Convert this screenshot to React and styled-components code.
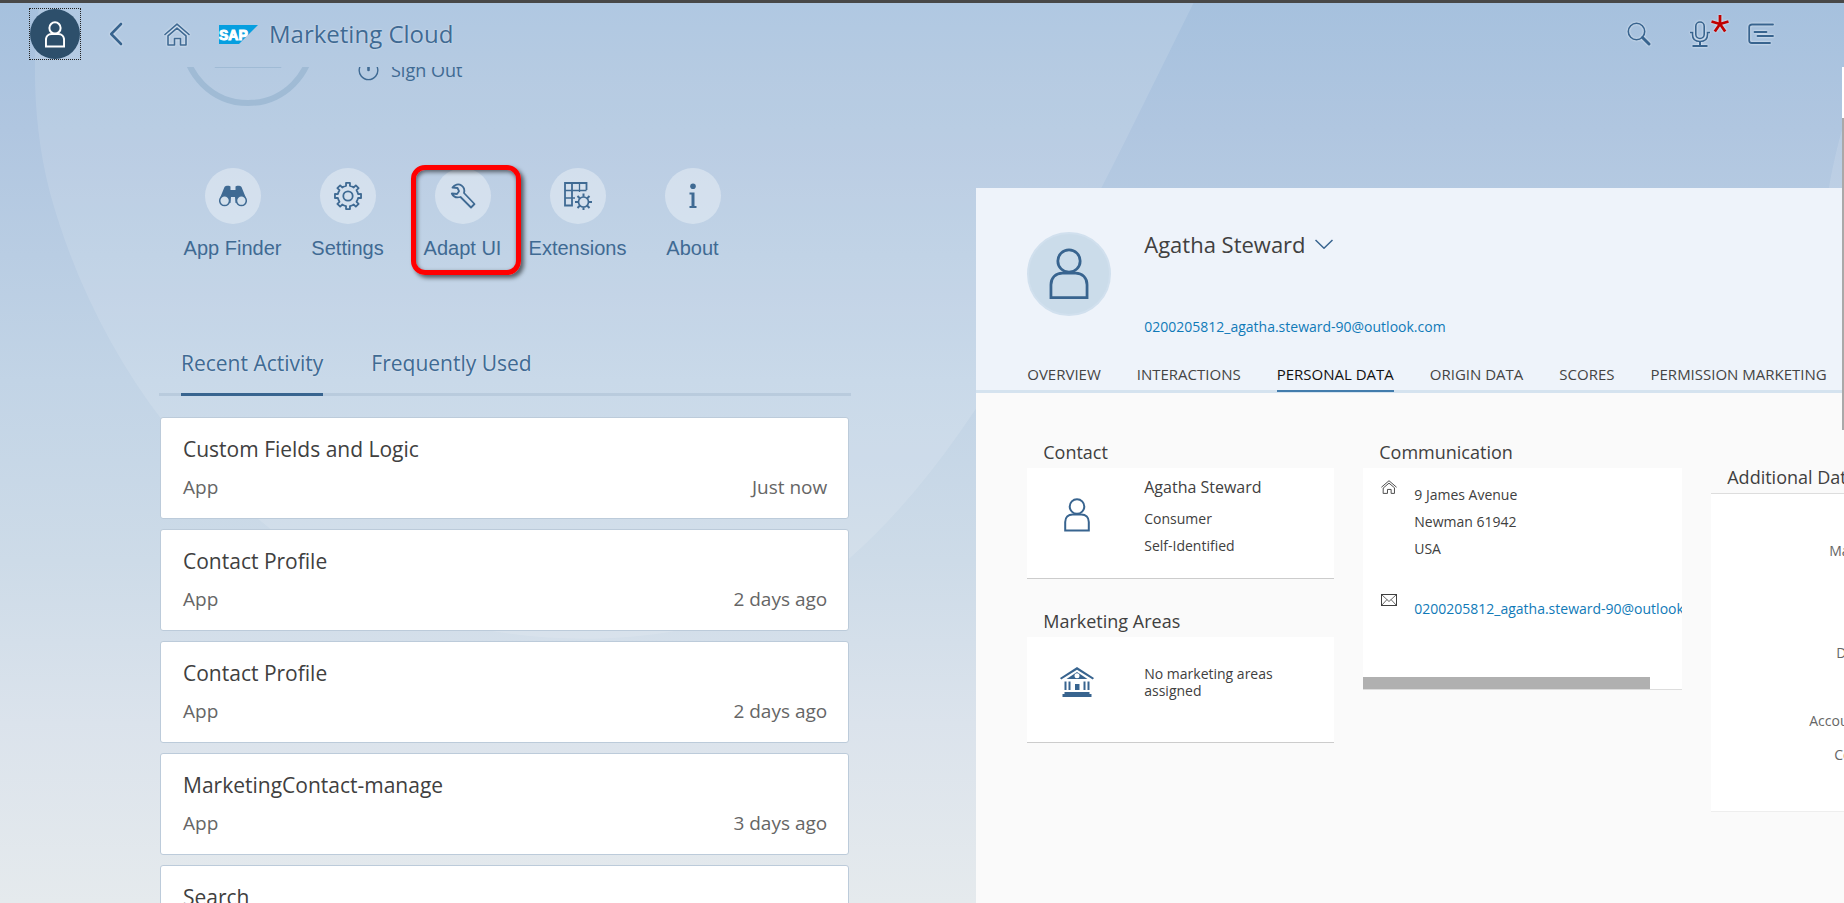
import React from "react";
import styled, { createGlobalStyle, css } from "styled-components";

const ink = "#3f6a93";
const uiFont = '"Open Sans", "Noto Sans", sans-serif';

const Global = createGlobalStyle`
  *, *::before, *::after { box-sizing: border-box; }
  html, body, #root { height: 100%; }
  body { margin: 0; font-family: ${uiFont}; color: #404040; }
  button { font: inherit; color: inherit; background: none; border: 0; padding: 0; cursor: pointer; }
  h1, h2, h3, p, ul, dl, dd, dt { margin: 0; padding: 0; font-weight: 400; }
  ul { list-style: none; }
  a { text-decoration: none; }
  svg { display: block; flex: none; }
`;

const Page = styled.div`
  position: relative;
  display: flex;
  flex-direction: column;
  height: 100vh;
  min-height: 600px;
  overflow: hidden;
  border-top: 3px solid #484848;
  background: linear-gradient(#a6c1de 0%, #b0c6e0 14%, #c2d4e6 42%, #cddbe8 62%, #dbe3ec 80%, #e5eaed 100%);
`;

const Backdrop = styled.svg`
  position: absolute;
  inset: 0;
  width: 100%;
  height: 100%;
`;

/* ---------- shell bar ---------- */

const ShellBar = styled.header`
  position: relative;
  display: flex;
  align-items: center;
  flex: 0 0 64px;
  padding: 0 70px 2px 29px;
  color: ${ink};
`;

const UserButton = styled.button`
  display: grid;
  place-items: center;
  width: 52px;
  height: 52px;
  border: 1px dotted #222;
  margin-right: 27px;
`;

const UserDisc = styled.span`
  display: grid;
  place-items: center;
  width: 50px;
  height: 50px;
  border-radius: 50%;
  background: #2d4f6b;
  color: #fff;
`;

const ShellButton = styled.button`
  position: relative;
  display: grid;
  place-items: center;
  width: ${(p) => p.$width || 28}px;
  height: 32px;
  margin-right: ${(p) => p.$gap || 0}px;
  svg { filter: drop-shadow(0 0 1px rgba(255, 255, 255, 0.8)); }
`;

const ShellTitle = styled.h1`
  flex: 1;
  margin-left: 11px;
  font-size: 24px;
  line-height: 32px;
  text-shadow: 0 0 2px rgba(255, 255, 255, 0.6);
`;

const Star = styled.svg`
  position: absolute;
  top: -3px;
  right: -19px;
`;

/* ---------- columns ---------- */

const Columns = styled.main`
  position: relative;
  display: grid;
  grid-template-columns: 9fr 8fr;
  flex: 1;
  min-height: 0;
  overflow: hidden;
`;

const MePane = styled.section`
  min-width: 0;
  padding: 0 127px 0 160px;
  color: ${ink};
  text-shadow: 0 0 2px rgba(255, 255, 255, 0.5);
`;

const Profile = styled.div`
  display: flex;
  align-items: flex-end;
  gap: 43px;
  height: 39px;
  padding-left: 21px;
  overflow: hidden;
`;

const SignOut = styled.button`
  display: flex;
  align-items: center;
  gap: 12px;
  height: 28px;
  margin-bottom: 22px;
  font-size: 18px;
  line-height: 28px;
`;

const Actions = styled.ul`
  display: flex;
  padding: 62px 0 0 15px;
`;

const ActionItem = styled.li`
  position: relative;
  flex: 0 0 115px;
`;

const ActionButton = styled.button`
  display: flex;
  flex-direction: column;
  align-items: center;
  gap: 12px;
  width: 100%;
  font-family: "Liberation Sans", Arial, sans-serif;
  font-size: 20px;
  line-height: 24px;
  white-space: nowrap;
`;

const ActionDisc = styled.span`
  display: grid;
  place-items: center;
  width: 56px;
  height: 56px;
  border-radius: 50%;
  background: rgba(226, 235, 243, 0.6);
`;

const Marker = styled.span`
  position: absolute;
  top: -3px;
  left: 6px;
  width: 110px;
  height: 110px;
  border: 5px solid #f00;
  border-radius: 14px;
  box-shadow: 3px 3px 4px rgba(0, 0, 0, 0.55), inset 1px 2px 4px rgba(0, 0, 0, 0.55);
  pointer-events: none;
`;

const ActivityTabs = styled.div`
  display: flex;
  gap: 48px;
  margin: 86px -2px 0 -1px;
  padding-left: 22px;
  border-bottom: 3px solid #b9cbdd;
`;

const ActivityTab = styled.button`
  height: 50px;
  padding-bottom: 14px;
  margin-bottom: -3px;
  font-size: 21px;
  line-height: 30px;
  border-bottom: 3px solid ${(p) => (p.$active ? "#38648f" : "transparent")};
  text-shadow: inherit;
`;

const ActivityList = styled.ul`
  display: flex;
  flex-direction: column;
  gap: 10px;
  padding-top: 21px;
`;

const ActivityCard = styled.li`
  display: grid;
  grid-template-columns: 1fr auto;
  row-gap: 8px;
  height: 102px;
  padding: 16px 21px 0 22px;
  border: 1px solid #bccbda;
  border-radius: 3px;
  background: #fff;
  color: #666;
  font-size: 19px;
  line-height: 30px;
  align-content: start;
  text-shadow: none;
`;

const ActivityTitle = styled.h3`
  grid-column: 1 / -1;
  color: #404040;
  font-size: 21px;
  line-height: 30px;
`;

/* ---------- contact panel ---------- */

const Panel = styled.section`
  display: flex;
  flex-direction: column;
  min-width: 0;
  margin-top: 121px;
  overflow: hidden;
  background: #fafafa;
`;

const PanelHead = styled.div`
  padding: 44px 0 0 51px;
  background: #eef3fa;
  border-bottom: 3px solid #d5e3ef;
`;

const Identity = styled.div`
  display: flex;
  gap: 33px;
`;

const Avatar = styled.span`
  display: grid;
  place-items: center;
  flex: none;
  width: 84px;
  height: 84px;
  border-radius: 50%;
  border: 2px solid #d1e0ee;
  background: #cbdcea;
  color: #38648f;
`;

const NameButton = styled.button`
  display: flex;
  align-items: center;
  gap: 9px;
  height: 24px;
  font-size: 22px;
  line-height: 24px;
`;

const link = css`
  color: #107ab8;
  font-size: 14px;
  line-height: 20px;
  white-space: nowrap;
`;

const HeadMail = styled.a`
  ${link}
  display: block;
  margin-top: 61px;
`;

const PanelTabs = styled.div`
  display: flex;
  gap: 36px;
  margin-top: 26px;
`;

const PanelTab = styled.button`
  flex: none;
  height: 29px;
  padding-bottom: 5px;
  margin-bottom: -2px;
  font-size: 15px;
  line-height: 22px;
  white-space: nowrap;
  color: ${(p) => (p.$active ? "#111" : "#444")};
  border-bottom: 2px solid ${(p) => (p.$active ? "#427cac" : "transparent")};
`;

const PanelBody = styled.div`
  display: flex;
  align-items: flex-start;
  gap: 29px;
  padding: 47px 0 0 51px;
`;

const Stack = styled.div`
  display: flex;
  flex-direction: column;
  flex: 0 0 ${(p) => p.$width}px;
  gap: 30px;
  padding-top: ${(p) => p.$drop || 0}px;
  min-width: 0;
`;

const BlockTitle = styled.h2`
  height: 28px;
  padding-left: 16px;
  font-size: 18px;
  line-height: 24px;
  white-space: nowrap;
`;

const Block = styled.div`
  display: flex;
  height: ${(p) => p.$height}px;
  border-bottom: 1px solid #ccc;
  background: #fff;
  font-size: 14px;
`;

const BlockIcon = styled.span`
  display: flex;
  justify-content: center;
  flex: 0 0 100px;
  padding-top: 30px;
  color: #38648f;
`;

const BlockText = styled.div`
  flex: 1;
  padding: ${(p) => p.$top}px 40px 0 17px;
  line-height: ${(p) => p.$line}px;
`;

const Person = styled.p`
  margin-bottom: 4px;
  font-size: 16px;
`;

const Scroller = styled.div`
  display: flex;
  flex-direction: column;
  height: 222px;
  border-bottom: 1px solid #ddd;
  background: #fff;
  overflow: hidden;
  font-size: 14px;
`;

const Entry = styled.div`
  display: flex;
  gap: 17px;
  padding: 12px 0 0 18px;
  height: ${(p) => p.$height}px;
  line-height: 27px;
  white-space: nowrap;
`;

const EntryText = styled.address`
  padding-top: 1px;
  font-style: normal;
  a { ${link} line-height: 27px; }
`;

const ScrollThumb = styled.div`
  width: 90%;
  height: 12px;
  margin-top: auto;
  background: #b0b0b0;
`;

const Fields = styled.dl`
  height: 319px;
  padding-top: 40px;
  border-top: 1px solid #ddd;
  border-bottom: 1px solid #eee;
  background: #fff;
  color: #666;
  font-size: 14px;
`;

const Field = styled.dt`
  height: 34px;
  padding-left: ${(p) => p.$start}px;
  line-height: 34px;
  white-space: nowrap;
`;

const PageRail = styled.div`
  position: absolute;
  top: 0;
  right: 0;
  width: 2px;
  height: 363px;
  border-top: 51px solid #fff;
  background: #a9a9a9;
`;

/* ---------- drawings ---------- */

const PersonIcon = ({ w, h, stroke }) => (
  <svg width={w} height={h} viewBox="0 0 26 34" fill="none" stroke="currentColor" strokeWidth={stroke}>
    <circle cx="13" cy="8.5" r="7.3" />
    <path d="M1.2 32.5V24c0-4.500 3-7.500 7.500-7.500h8.600c4.500 0 7.500 3 7.500 7.500v8.500z" />
  </svg>
);

const HomeIcon = ({ w, h, stroke = 1.6 }) => (
  <svg width={w} height={h} viewBox="0 0 26 23" fill="none" stroke="currentColor" strokeWidth={stroke} strokeLinecap="round" strokeLinejoin="round">
    <path d="M1 11.500L13 1.200l12 10.300" />
    <path d="M4 12.800L13 5.200l9 7.600v9.200h-5.500v-6.500h-6v6.500H4z" />
  </svg>
);

const BackIcon = () => (
  <svg width="14" height="24" viewBox="0 0 14 24" fill="none" stroke="#38648f" strokeWidth="2.600" strokeLinecap="round" strokeLinejoin="round">
    <path d="M12 2L2.200 12 12 22" />
  </svg>
);

const SapLogo = () => (
  <svg width="39" height="19" viewBox="0 0 39 19" role="img" aria-label="SAP">
    <path d="M0 0h39L20 19H0z" fill="#069fe0" />
    <text x="0" y="15" fill="#fff" stroke="#fff" strokeWidth="1" fontFamily="Liberation Sans, Arial, sans-serif" fontWeight="700" fontSize="14">SAP</text>
  </svg>
);

const SearchIcon = () => (
  <svg width="24" height="24" viewBox="0 0 24 24" fill="none" stroke="#38648f" strokeLinecap="round">
    <circle cx="9.500" cy="9.500" r="8.200" strokeWidth="1.600" />
    <path d="M15.500 15.500l6.500 6.500" strokeWidth="3" />
  </svg>
);

const MicIcon = () => (
  <svg width="20" height="26" viewBox="0 0 20 26" fill="none" stroke="#38648f" strokeWidth="1.600">
    <rect x="5.800" y="1" width="8.400" height="16.500" rx="4.200" />
    <path d="M0 11.500h2.500v2c0 4.500 3 7 7.500 7s7.500-2.500 7.500-7v-2H20" />
    <path d="M10 20.500V25M2.500 25h15" strokeWidth="2" />
  </svg>
);

const MenuIcon = () => (
  <svg width="26" height="22" viewBox="0 0 26 22" fill="none" stroke="#38648f" strokeWidth="1.800" strokeLinecap="round">
    <path d="M25 1.500H4C2.300 1.500 1.200 2.600 1.200 4v13.500c0 1.600 1 2.500 2.600 2.500H22" />
    <path d="M6.500 9h12M9.500 13h15.500" />
  </svg>
);

const PowerIcon = () => (
  <svg width="21" height="21" viewBox="0 0 21 21" fill="none" stroke="currentColor">
    <path d="M6 2.200a9.300 9.300 0 1 0 9 0" strokeWidth="1.400" />
    <path d="M10.500 0v10" strokeWidth="2.600" strokeLinecap="round" />
  </svg>
);

const ProfileRing = () => (
  <svg width="134" height="134" viewBox="0 0 134 134" fill="none" stroke="#a0bbd5">
    <circle cx="67" cy="67" r="64" strokeWidth="6" />
    <circle cx="67" cy="42" r="16" />
    <path d="M34 95.500V80c0-12 7-20 18-20h30c11 0 18 8 18 20v15.500z" />
  </svg>
);

const BinocularsIcon = () => (
  <svg width="28" height="22" viewBox="0 0 28 22" fill="currentColor">
    <path d="M5.500 2C6 .800 10.500.300 11.500 1.500V5h5V1.500c1-1.200 5.500-.700 6 .500l4.500 11-5 5h-5.500L16 12h-4l-.500 6H6l-5-5z" />
    <circle cx="5.600" cy="15.700" r="4.900" fill="#d3e0ec" stroke="currentColor" strokeWidth="1.500" />
    <circle cx="22.400" cy="15.700" r="4.900" fill="#d3e0ec" stroke="currentColor" strokeWidth="1.500" />
  </svg>
);

const gearPath = (c, root, tip, teeth, share) => {
  const step = (Math.PI * 2) / teeth;
  const at = (r, a) => `${(c + r * Math.sin(a)).toFixed(2)} ${(c - r * Math.cos(a)).toFixed(2)}`;
  let d = "";
  for (let i = 0; i < teeth; i += 1) {
    const a = i * step;
    const half = step * share;
    d += `${i ? "L" : "M"}${at(root, a - half)}L${at(tip, a - half * 0.8)}L${at(tip, a + half * 0.8)}L${at(root, a + half)}`;
    d += `A${root} ${root} 0 0 1 ${at(root, a + step - half)}`;
  }
  return `${d}z`;
};

const GearIcon = () => (
  <svg width="28" height="28" viewBox="0 0 28 28" fill="none" stroke="currentColor" strokeWidth="1.800" strokeLinejoin="round">
    <path d={gearPath(14, 10.3, 13.2, 8, 0.24)} />
    <circle cx="14" cy="14" r="4.700" />
  </svg>
);

const WrenchIcon = () => (
  <svg width="26" height="26" viewBox="0 0 26 26" fill="none" stroke="currentColor" strokeWidth="1.800" strokeLinejoin="round">
    <path d="M2.500 4.500C4.500 1.500 8.500.500 11.500 2.500c2.500 1.700 3.300 4.500 2.500 7.500l10.500 11-3.500 3.500L10.500 14c-3.500 1-7 0-8.700-3.500l5.200.500 2-2.800L7.500 5z" />
  </svg>
);

const ExtensionsIcon = () => (
  <svg width="28" height="28" viewBox="0 0 28 28" fill="none" stroke="currentColor">
    <path d="M22.500 8V1H1v22.500h7V1" strokeWidth="1.800" />
    <path d="M1 8.500h21.500M1 16h10M15.500 1v9" strokeWidth="1.300" />
    <circle cx="19.500" cy="20" r="5" strokeWidth="1.700" />
    <path d="M19.500 11.500v3.200M19.500 25.300v2.700M11 20h3.200M24.800 20H28M13.500 14l2.200 2.200M23.300 23.800l2.200 2.200M25.500 14l-2.200 2.200M15.700 23.800l-2.200 2.200" strokeWidth="2" />
  </svg>
);

const InfoIcon = () => (
  <svg width="8" height="26" viewBox="0 0 8 26" fill="currentColor">
    <circle cx="4" cy="3.200" r="2.800" />
    <path d="M.500 9.500h5v13.500H7.500v2h-7v-2h2v-11.500h-2z" />
  </svg>
);

const BankIcon = () => (
  <svg width="34" height="30" viewBox="0 0 34 30" fill="currentColor">
    <path d="M0 11L17 0l17 11-1.200 1.500L17 2.700 1.200 12.500z" />
    <path fillRule="evenodd" d="M6.500 12L17 5l10.500 7zM17 6.200a2.500 2.500 0 1 0 0 5 2.500 2.500 0 0 0 0-5z" />
    <path d="M4.500 14.500h2V23h-2zM8.500 14.500h2V23h-2zM15 17h4.500v6H15zM23.500 14.500h2V23h-2zM27.500 14.500h2V23h-2zM4.500 25h25v2h2v3h-29v-3h2z" />
  </svg>
);

const MailIcon = () => (
  <svg width="16" height="12" viewBox="0 0 16 12" fill="none" stroke="currentColor">
    <rect x="0.500" y="0.500" width="15" height="11" />
    <path d="M.500.500L8 7.500l7.500-7M.500 11.500l5.500-6M15.500 11.500l-5.500-6" strokeWidth="0.800" />
  </svg>
);

const ChevronIcon = () => (
  <svg width="18" height="10" viewBox="0 0 18 10" fill="none" stroke="#38648f" strokeWidth="1.500">
    <path d="M.500 1L9 9.200 17.500 1" />
  </svg>
);

/* ---------- data ---------- */

const actions = [
  { label: "App Finder", icon: <BinocularsIcon /> },
  { label: "Settings", icon: <GearIcon /> },
  { label: "Adapt UI", icon: <WrenchIcon />, marked: true },
  { label: "Extensions", icon: <ExtensionsIcon /> },
  { label: "About", icon: <InfoIcon /> },
];

const recent = [
  ["Custom Fields and Logic", "Just now"],
  ["Contact Profile", "2 days ago"],
  ["Contact Profile", "2 days ago"],
  ["MarketingContact-manage", "3 days ago"],
  ["Search", "3 days ago"],
];

const sections = ["OVERVIEW", "INTERACTIONS", "PERSONAL DATA", "ORIGIN DATA", "SCORES", "PERMISSION MARKETING"];

const fields = [
  ["Marital Status:", 118],
  ["", 0],
  ["", 0],
  ["Department:", 125],
  ["", 0],
  ["Account:", 98],
  ["Company:", 123],
];

export default function App() {
  return (
    <Page>
      <Global />
      <Backdrop viewBox="0 0 1844 900" preserveAspectRatio="none" aria-hidden="true">
        <path
          d="M40 -3C32 50 32 120 50 190C72 270 110 350 165 421C220 490 300 560 400 605C560 660 740 640 850 555C980 440 1070 250 1195 -3z"
          fill="#fff"
          fillOpacity="0.120"
        />
        <path d="M1844 120C1838 140 1832 165 1828 190H1844z" fill="#fff" fillOpacity="0.120" />
      </Backdrop>

      <ShellBar>
        <UserButton aria-label="User">
          <UserDisc><PersonIcon w={20} h={27} stroke={2.6} /></UserDisc>
        </UserButton>
        <ShellButton $width={15} $gap={41} aria-label="Back"><BackIcon /></ShellButton>
        <ShellButton $width={26} $gap={29} aria-label="Home"><HomeIcon w={26} h={23} /></ShellButton>
        <SapLogo />
        <ShellTitle>Marketing Cloud</ShellTitle>
        <ShellButton $width={24} $gap={39} aria-label="Search"><SearchIcon /></ShellButton>
        <ShellButton $width={20} $gap={38} aria-label="Voice input">
          <MicIcon />
          <Star width="18" height="18" viewBox="0 0 18 18" stroke="#c00000" strokeWidth="2.800">
            <path d="M9 9V0M9 9L.500 6.500M9 9l8.500-2.500M9 9l-5.200 7.500M9 9l5.200 7.500" />
          </Star>
        </ShellButton>
        <ShellButton $width={26} aria-label="Menu"><MenuIcon /></ShellButton>
      </ShellBar>

      <Columns>
        <MePane>
          <Profile>
            <ProfileRing />
            <SignOut><PowerIcon />Sign Out</SignOut>
          </Profile>
          <Actions>
            {actions.map((a) => (
              <ActionItem key={a.label}>
                <ActionButton>
                  <ActionDisc>{a.icon}</ActionDisc>
                  {a.label}
                </ActionButton>
                {a.marked && <Marker />}
              </ActionItem>
            ))}
          </Actions>
          <ActivityTabs role="tablist">
            <ActivityTab role="tab" aria-selected="true" $active>Recent Activity</ActivityTab>
            <ActivityTab role="tab" aria-selected="false">Frequently Used</ActivityTab>
          </ActivityTabs>
          <ActivityList>
            {recent.map(([title, when], i) => (
              <ActivityCard key={i}>
                <ActivityTitle>{title}</ActivityTitle>
                <span>App</span>
                <span>{when}</span>
              </ActivityCard>
            ))}
          </ActivityList>
        </MePane>

        <Panel>
          <PanelHead>
            <Identity>
              <Avatar><PersonIcon w={40} h={52} stroke={1.8} /></Avatar>
              <div>
                <NameButton>Agatha Steward<ChevronIcon /></NameButton>
                <HeadMail href="#mail">0200205812_agatha.steward-90@outlook.com</HeadMail>
              </div>
            </Identity>
            <PanelTabs role="tablist">
              {sections.map((s) => (
                <PanelTab key={s} role="tab" aria-selected={s === "PERSONAL DATA"} $active={s === "PERSONAL DATA"}>{s}</PanelTab>
              ))}
            </PanelTabs>
          </PanelHead>
          <PanelBody>
            <Stack $width={307}>
              <div>
                <BlockTitle>Contact</BlockTitle>
                <Block $height={111}>
                  <BlockIcon><PersonIcon w={26} h={34} stroke={2} /></BlockIcon>
                  <BlockText $top={6} $line={27}>
                    <Person>Agatha Steward</Person>
                    <p>Consumer</p>
                    <p>Self-Identified</p>
                  </BlockText>
                </Block>
              </div>
              <div>
                <BlockTitle>Marketing Areas</BlockTitle>
                <Block $height={106}>
                  <BlockIcon><BankIcon /></BlockIcon>
                  <BlockText $top={28} $line={17}>No marketing areas assigned</BlockText>
                </Block>
              </div>
            </Stack>
            <Stack $width={319}>
              <div>
                <BlockTitle>Communication</BlockTitle>
                <Scroller>
                  <Entry $height={114}>
                    <HomeIcon w={16} h={14} stroke={1.5} />
                    <EntryText>9 James Avenue<br />Newman 61942<br />USA</EntryText>
                  </Entry>
                  <Entry $height={60}>
                    <MailIcon />
                    <EntryText><a href="#mail">0200205812_agatha.steward-90@outlook.com</a></EntryText>
                  </Entry>
                  <ScrollThumb />
                </Scroller>
              </div>
            </Stack>
            <Stack $width={319} $drop={25}>
              <div>
                <BlockTitle>Additional Data</BlockTitle>
                <Fields>
                  {fields.map(([name, start], i) => (
                    <Field key={i} $start={start}>{name}</Field>
                  ))}
                </Fields>
              </div>
            </Stack>
          </PanelBody>
        </Panel>
        <PageRail />
      </Columns>
    </Page>
  );
}
